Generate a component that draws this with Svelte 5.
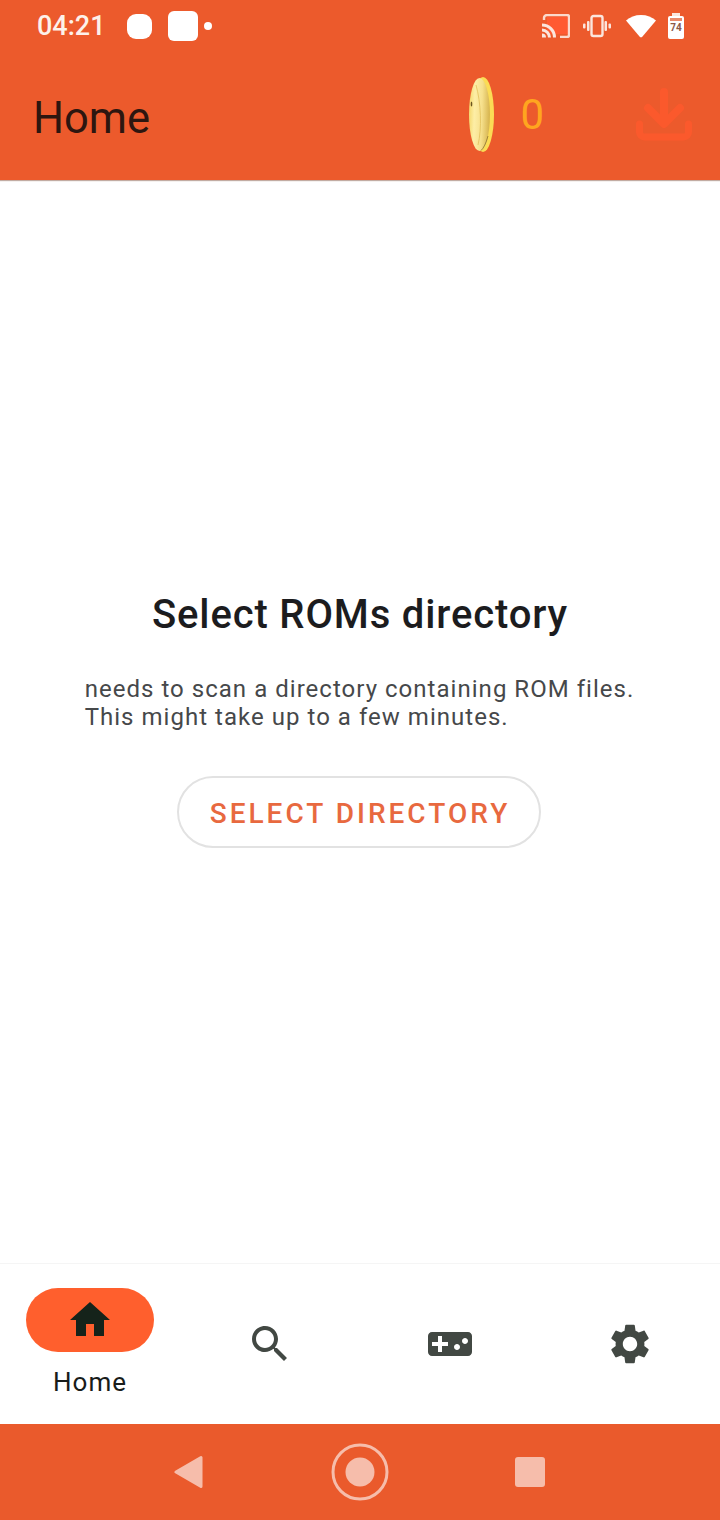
<script lang="ts">
    const NAV_ICONS = [
        { name: 'search', d: 'M15.5 14h-.79l-.28-.27C15.41 12.59 16 11.11 16 9.5 16 5.91 13.09 3 9.5 3S3 5.91 3 9.5 5.91 16 9.5 16c1.61 0 3.09-.59 4.23-1.57l.27.28v.79l5 4.99L20.49 19l-4.99-5zm-6 0C7.01 14 5 11.99 5 9.5S7.01 5 9.5 5 14 7.01 14 9.5 11.99 14 9.5 14z' },
        { name: 'games', d: 'M21 6H3c-1.1 0-2 .9-2 2v8c0 1.1.9 2 2 2h18c1.1 0 2-.9 2-2V8c0-1.1-.9-2-2-2zm-10 7H8v3H6v-3H3v-2h3V8h2v3h3v2zm4.5 2c-.83 0-1.5-.67-1.5-1.5s.67-1.5 1.5-1.5 1.5.67 1.5 1.5-.67 1.5-1.5 1.5zm4-3c-.83 0-1.5-.67-1.5-1.5S18.67 9 19.5 9s1.5.67 1.5 1.5-.67 1.5-1.5 1.5z' },
        { name: 'settings', d: 'M19.14 12.94c.04-.3.06-.61.06-.94 0-.32-.02-.64-.07-.94l2.03-1.58c.18-.14.23-.41.12-.61l-1.92-3.32c-.12-.22-.37-.29-.59-.22l-2.39.96c-.5-.38-1.03-.7-1.62-.94l-.36-2.54c-.04-.24-.24-.41-.48-.41h-3.84c-.24 0-.43.17-.47.41l-.36 2.54c-.59.24-1.13.57-1.62.94l-2.39-.96c-.22-.08-.47 0-.59.22L2.74 8.87c-.12.21-.08.47.12.61l2.03 1.58c-.05.3-.09.63-.09.94s.02.64.07.94l-2.03 1.58c-.18.14-.23.41-.12.61l1.92 3.32c.12.22.37.29.59.22l2.39-.96c.5.38 1.03.7 1.62.94l.36 2.54c.05.24.24.41.48.41h3.84c.24 0 .44-.17.47-.41l.36-2.54c.59-.24 1.13-.56 1.62-.94l2.39.96c.22.08.47 0 .59-.22l1.92-3.32c.12-.22.07-.47-.12-.61l-2.01-1.58zM12 15.6c-1.98 0-3.6-1.62-3.6-3.6s1.62-3.6 3.6-3.6 3.6 1.62 3.6 3.6-1.62 3.6-3.6 3.6z' },
    ]
</script>

<div class="screen">
    <header>
        <div class="status">
            <span class="time">04:21</span>
            <span class="blob"></span>
            <span class="square"></span>
            <span class="dot"></span>
            <div class="status-right">
                <svg width="28" height="24" viewBox="0 0 28 24">
                    <rect x="5" y="3" width="21.5" height="17" fill="#ff5a32" />
                    <path d="M2 6V4a3 3 0 0 1 3-3h20a2 2 0 0 1 2 2v18a2 2 0 0 1-2 2h-7" fill="none" stroke="#fbd9cc" stroke-width="2.4" />
                    <path d="M0 9.5a14 14 0 0 1 14 14h-3a11 11 0 0 0-11-11zM0 14.500a9 9 0 0 1 9 9H6a6 6 0 0 0-6-6zM0 19.500a4 4 0 0 1 4 4H0z" fill="#fbe6dd" />
                </svg>
                <svg class="vibrate" width="28" height="24" viewBox="0 0 28 24" fill="#fbe6dd">
                    <rect x="8.500" y="2" width="11" height="20" rx="2" fill="none" stroke="#fbe6dd" stroke-width="2.400" />
                    <rect x="4" y="7" width="2.500" height="10" rx="1" />
                    <rect x="21.500" y="7" width="2.500" height="10" rx="1" />
                    <rect x="0" y="9.500" width="2.500" height="5" rx="1" />
                    <rect x="25.500" y="9.500" width="2.500" height="5" rx="1" />
                </svg>
                <svg class="wifi" width="30" height="24" viewBox="0 0 30 24">
                    <path d="M15 1C9 1 4 3 0 6.500L13.500 22.500a2 2 0 0 0 3 0L30 6.500C26 3 21 1 15 1z" fill="#fff" />
                </svg>
                <div class="battery">
                    <span class="cap"></span>
                    <div class="cell"><span class="level"></span><span class="pct">74</span></div>
                </div>
            </div>
        </div>
        <div class="toolbar">
            <h1>Home</h1>
            <svg class="coin" width="25" height="75" viewBox="0 0 25 75">
                <defs>
                    <linearGradient id="face" x1="0" x2="1" y1="0" y2="0.1">
                        <stop offset="0" stop-color="#f3d565" />
                        <stop offset="0.3" stop-color="#fdeea6" />
                        <stop offset="0.65" stop-color="#f6e08c" />
                        <stop offset="1" stop-color="#d9b752" />
                    </linearGradient>
                </defs>
                <ellipse cx="14" cy="37.500" rx="11" ry="37.500" fill="#fbdc55" />
                <ellipse cx="10.500" cy="37.500" rx="10.500" ry="36.500" fill="url(#face)" />
                <path d="M7 8C12 25 13 52 9 68" fill="none" stroke="#e2c05c" stroke-width="0.800" />
                <ellipse cx="2.500" cy="27" rx="0.800" ry="2.500" fill="#6b5520" />
                <path d="M12 73.500Q16 70 19 59" fill="none" stroke="#8a7030" stroke-width="0.800" />
            </svg>
            <span class="coins">0</span>
            <svg class="download" width="56" height="53" viewBox="0 0 56 53" fill="none" stroke="#fb592c" stroke-width="8" stroke-linecap="round" stroke-linejoin="round">
                <path d="M28 4V34M12 20L28 36L44 20" />
                <path d="M3.500 36V44A5 5 0 0 0 8.500 49H47.500A5 5 0 0 0 52.500 44V36" stroke-width="7" />
            </svg>
        </div>
    </header>

    <main>
        <h2>Select ROMs directory</h2>
        <p>needs to scan a directory containing ROM files.<br />This might take up to a few minutes.</p>
        <button>SELECT DIRECTORY</button>
    </main>

    <nav>
        <div class="tab active">
            <span class="pill">
                <svg width="48" height="48" viewBox="0 0 24 24"><path d="M10 20v-6h4v6h5v-8h3L12 3 2 12h3v8z" /></svg>
            </span>
            <span class="label">Home</span>
        </div>
        {#each NAV_ICONS as icon}
            <div class="tab">
                <svg width="48" height="48" viewBox="0 0 24 24"><path d={icon.d} /></svg>
            </div>
        {/each}
    </nav>

    <div class="sysnav">
        <svg width="30" height="34" viewBox="0 0 30 34">
            <path d="M27 2.500V31.500L2 17z" fill="#f6bdab" stroke="#f6bdab" stroke-width="3" stroke-linejoin="round" />
        </svg>
        <svg width="58" height="58" viewBox="0 0 58 58">
            <circle cx="29" cy="29" r="27" fill="none" stroke="#f6bdab" stroke-width="3" />
            <circle cx="29" cy="29" r="14.500" fill="#f6bdab" />
        </svg>
        <span class="stop"></span>
    </div>
</div>

<style>
    :global(body) {
        margin: 0;
        background: #fff;
    }
    .screen {
        width: 720px;
        height: 1520px;
        display: flex;
        flex-direction: column;
        font-family: Roboto, sans-serif;
    }
    header {
        height: 180px;
        background: #ec5a2c;
        box-shadow: 0 1px 1px rgba(120, 70, 50, 0.45);
        z-index: 1;
    }
    .status {
        height: 52px;
        display: flex;
        align-items: center;
        padding: 0 36px 0 37px;
    }
    .time {
        color: #fdf1ea;
        font-size: 27px;
        font-weight: 500;
        margin-right: 21px;
    }
    .blob {
        width: 25px;
        height: 25px;
        background: #fff;
        border-radius: 9px;
        margin-right: 16px;
    }
    .square {
        width: 30px;
        height: 30px;
        background: #fff;
        border-radius: 6px;
        margin-right: 6px;
    }
    .dot {
        width: 8px;
        height: 8px;
        background: #fff;
        border-radius: 50%;
    }
    .status-right {
        margin-left: auto;
        display: flex;
        align-items: center;
    }
    .vibrate { margin-left: 13px; }
    .wifi { margin-left: 15px; }
    .battery {
        margin-left: 12px;
        width: 16px;
        display: flex;
        flex-direction: column;
        align-items: center;
    }
    .cap {
        width: 8px;
        height: 3px;
        background: #fbe6dd;
    }
    .cell {
        width: 16px;
        height: 23px;
        background: #fff;
        border-radius: 2px;
        display: flex;
        flex-direction: column;
        align-items: center;
    }
    .level {
        width: 12px;
        height: 3px;
        margin-top: 2px;
        background: #e98a6b;
    }
    .pct {
        color: #8a5a4a;
        font-size: 10px;
        font-weight: 700;
        line-height: 13px;
    }
    .toolbar {
        height: 124px;
        display: flex;
        align-items: center;
        padding: 0 28px 0 33px;
    }
    h1 {
        margin: 8px 0 0;
        font-size: 43.500px;
        font-weight: 400;
        color: #2d1610;
        flex: 1;
    }
    .coins {
        margin: 0 92px 0 26px;
        font-size: 42px;
        color: #ffa51f;
    }
    main {
        flex: 1;
        display: flex;
        flex-direction: column;
        align-items: center;
        justify-content: center;
        padding-bottom: 5px;
    }
    h2 {
        margin: 0 0 37px;
        font-size: 40px;
        font-weight: 500;
        letter-spacing: 0.85px;
        color: #1c1c1e;
    }
    p {
        margin: 0 1px 45px 0;
        font-size: 24px;
        line-height: 28px;
        letter-spacing: 1.03px;
        color: #46484a;
    }
    button {
        width: 364px;
        height: 72px;
        margin-right: 2px;
        padding: 3px 0 0 2px;
        background: #fff;
        border: 2px solid #e2e2e2;
        border-radius: 36px;
        font-family: inherit;
        font-size: 28px;
        font-weight: 500;
        letter-spacing: 3px;
        color: #e8693f;
    }
    nav {
        height: 160px;
        display: flex;
        border-top: 1px solid #f5f5f5;
    }
    .tab {
        flex: 1;
        display: flex;
        flex-direction: column;
        align-items: center;
        justify-content: center;
    }
    .tab svg { fill: #424843; }
    .pill {
        width: 128px;
        height: 64px;
        border-radius: 32px;
        background: #ff5f2d;
        display: flex;
        align-items: center;
        justify-content: center;
    }
    .active { padding-bottom: 3px; }
    .active svg { fill: #15231a; }
    .label {
        margin-top: 14px;
        font-size: 26px;
        line-height: 32px;
        letter-spacing: 1px;
        color: #181c1a;
    }
    .sysnav {
        height: 96px;
        background: #ea5a2c;
        display: flex;
        align-items: center;
        justify-content: center;
        gap: 127px;
        padding-right: 2px;
    }
    .stop {
        width: 30px;
        height: 30px;
        margin-left: -1px;
        background: #f6bdab;
        border-radius: 3px;
    }
</style>
